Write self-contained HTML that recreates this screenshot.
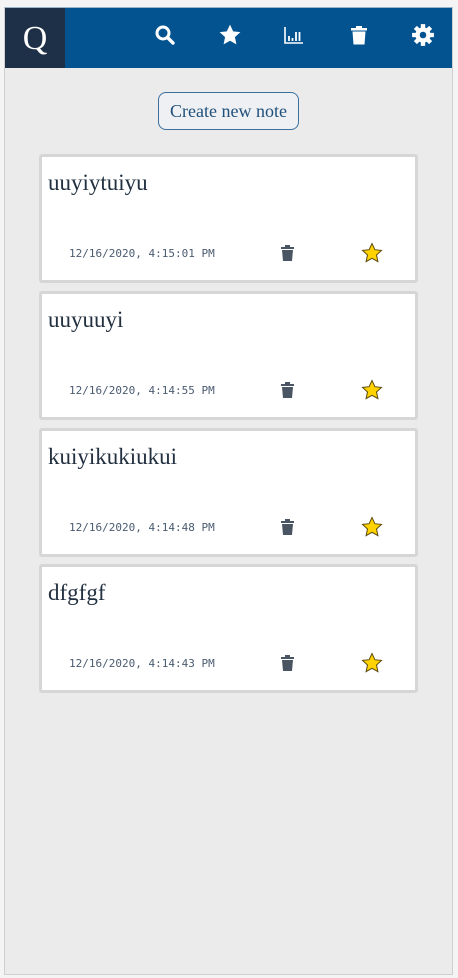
<!DOCTYPE html>
<html><head><meta charset="utf-8"><style>
*{margin:0;padding:0;box-sizing:border-box}
body{width:458px;height:978px;background:#f4f4f4;position:relative;overflow:hidden;font-family:"Liberation Serif",serif}
#app{position:absolute;left:4px;top:7px;width:449px;height:968px;background:#ebebeb;border:1px solid #cfcfcf;border-top:1px solid #9bb2cc}
#hdr{position:absolute;left:0;top:0;width:447px;height:60px;background:#02538f}
#logo{position:absolute;left:0;top:0;width:60px;height:60px;background:#1e3048;color:#fff;font-size:34px;text-align:center;line-height:62px}
.ic{position:absolute;top:16px;width:22px;height:22px}
#btn{position:absolute;left:153px;top:84px;width:141px;height:38px;border:1px solid #3a6f9e;border-radius:8px;background:#eef0f3;color:#1f4f7a;font-size:18px;text-align:center;line-height:36px}
.card{position:absolute;left:39px;width:379px;height:129px;background:#fff;border:3px solid #d6d6d6;border-radius:3px}
.t{position:absolute;left:6px;top:13px;font-size:23px;color:#223040}
.d{position:absolute;left:27px;top:90px;font-family:"DejaVu Sans Mono","Liberation Mono",monospace;font-size:11px;color:#4a5a70}
.tr{position:absolute;left:239px;top:88px}
.st{position:absolute;left:319px;top:85px}
</style></head><body>
<div id="app">
<div id="hdr">
<div id="logo">Q</div>
<svg class="ic" style="left:149px;top:16px" viewBox="0 0 22 22"><circle cx="9" cy="9" r="6" fill="none" stroke="#fff" stroke-width="3"/><path d="M13.5 13.5L19 19" stroke="#fff" stroke-width="3.4" stroke-linecap="round"/></svg>
<svg class="ic" style="left:213px;top:15px;width:24px;height:24px" viewBox="0 0 22 22"><path d="M11 1.5l2.9 6.2 6.6.7-5 4.6 1.4 6.6L11 16.3 5.1 19.6l1.4-6.6-5-4.6 6.6-.7z" fill="#fff"/></svg>
<svg class="ic" style="left:278px" viewBox="0 0 22 22"><path d="M2 3v16h18" fill="none" stroke="#fff" stroke-width="1.6"/><path d="M6 12v5M9.5 14v3M13 8v9M16.5 8v9" stroke="#fff" stroke-width="1.8"/></svg>
<svg class="ic" style="left:343px;top:15px;width:22px;height:24px" viewBox="0 0 22 22"><path d="M3 4h16v2.5H3zM8 2h6v2H8zM4.5 7.5h13l-1 13h-11z" fill="#fff"/></svg>
<svg class="ic" style="left:406px;top:15px;width:24px;height:24px" viewBox="0 0 22 22"><g fill="#fff"><circle cx="11" cy="11" r="7"/><g stroke="#fff" stroke-width="4"><path d="M11 1v20M1 11h20M4 4l14 14M18 4L4 18"/></g></g><circle cx="11" cy="11" r="3" fill="#02538f"/></svg>
</div>
<div id="btn">Create new note</div>
</div>
<div class="card" style="top:154px"><div class="t">uuyiytuiyu</div><div class="d">12/16/2020, 4:15:01 PM</div>
<svg class="tr" width="13" height="17" viewBox="0 0 13 17"><path d="M0 2h13v2H0zM4 0h5v2H4zM1 5h11l-1 11H2z" fill="#4a5563"/></svg>
<svg class="st" width="22" height="22" viewBox="0 0 22 22"><path d="M11 1.5l2.9 6.2 6.6.7-5 4.6 1.4 6.6L11 16.3 5.1 19.6l1.4-6.6-5-4.6 6.6-.7z" fill="#ffd200" stroke="#5a4a10" stroke-width="1"/></svg></div>
<div class="card" style="top:291px"><div class="t">uuyuuyi</div><div class="d">12/16/2020, 4:14:55 PM</div>
<svg class="tr" width="13" height="17" viewBox="0 0 13 17"><path d="M0 2h13v2H0zM4 0h5v2H4zM1 5h11l-1 11H2z" fill="#4a5563"/></svg>
<svg class="st" width="22" height="22" viewBox="0 0 22 22"><path d="M11 1.5l2.9 6.2 6.6.7-5 4.6 1.4 6.6L11 16.3 5.1 19.6l1.4-6.6-5-4.6 6.6-.7z" fill="#ffd200" stroke="#5a4a10" stroke-width="1"/></svg></div>
<div class="card" style="top:428px"><div class="t">kuiyikukiukui</div><div class="d">12/16/2020, 4:14:48 PM</div>
<svg class="tr" width="13" height="17" viewBox="0 0 13 17"><path d="M0 2h13v2H0zM4 0h5v2H4zM1 5h11l-1 11H2z" fill="#4a5563"/></svg>
<svg class="st" width="22" height="22" viewBox="0 0 22 22"><path d="M11 1.5l2.9 6.2 6.6.7-5 4.6 1.4 6.6L11 16.3 5.1 19.6l1.4-6.6-5-4.6 6.6-.7z" fill="#ffd200" stroke="#5a4a10" stroke-width="1"/></svg></div>
<div class="card" style="top:564px"><div class="t">dfgfgf</div><div class="d">12/16/2020, 4:14:43 PM</div>
<svg class="tr" width="13" height="17" viewBox="0 0 13 17"><path d="M0 2h13v2H0zM4 0h5v2H4zM1 5h11l-1 11H2z" fill="#4a5563"/></svg>
<svg class="st" width="22" height="22" viewBox="0 0 22 22"><path d="M11 1.5l2.9 6.2 6.6.7-5 4.6 1.4 6.6L11 16.3 5.1 19.6l1.4-6.6-5-4.6 6.6-.7z" fill="#ffd200" stroke="#5a4a10" stroke-width="1"/></svg></div>
</body></html>
